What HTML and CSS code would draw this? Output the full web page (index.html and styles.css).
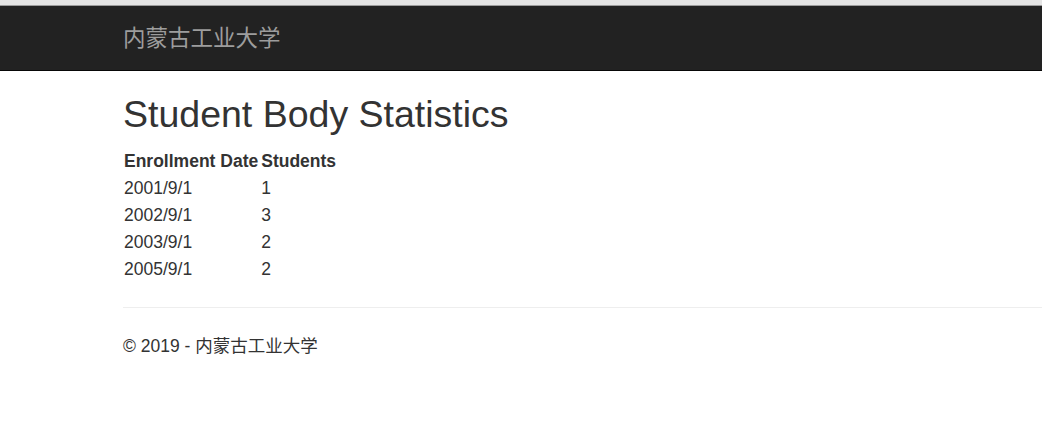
FILE: index.html
```html
<!DOCTYPE html>
<html lang="zh">
<head>
<meta charset="utf-8">
<title>Student Body Statistics</title>
<link rel="stylesheet" href="styles.css">
</head>
<body>
<div class="chrome"></div>
<nav class="navbar">
  <div class="container">
    <a class="brand" href="#">内蒙古工业大学</a>
  </div>
</nav>
<main class="container body-content">
  <h2 class="title">Student Body Statistics</h2>
  <table class="stats">
    <tr><th>Enrollment Date</th><th>Students</th></tr>
    <tr><td>2001/9/1</td><td>1</td></tr>
    <tr><td>2002/9/1</td><td>3</td></tr>
    <tr><td>2003/9/1</td><td>2</td></tr>
    <tr><td>2005/9/1</td><td>2</td></tr>
  </table>
  <hr class="rule">
  <footer class="footer">
    <p>© 2019 - 内蒙古工业大学</p>
  </footer>
</main>
</body>
</html>
```

FILE: styles.css
```css
html, body {
  margin: 0;
  padding: 0;
  background: #fff;
}
body {
  font-family: "Liberation Sans", Arial, "Noto Sans CJK SC", sans-serif;
  font-size: 17.5px;
  line-height: 25px;
  color: #333;
}
.chrome {
  height: 5px;
  background: #e4e4e4;
  border-bottom: 1px solid #9c9c9c;
}
.navbar {
  background: #222;
  border-bottom: 1px solid #080808;
  box-sizing: border-box;
  height: 65px;
}
.container {
  padding-left: 123px;
}
.navbar .container {
  display: flex;
  align-items: center;
  height: 64px;
}
.brand {
  color: #9d9d9d;
  text-decoration: none;
  font-size: 22.5px;
  line-height: 25px;
}
.title {
  font-family: "Liberation Sans", Arial, sans-serif;
  font-weight: 500;
  font-size: 37.5px;
  line-height: 41px;
  margin: 23px 0 11px 0;
  color: #333;
}
.stats {
  border-collapse: separate;
  border-spacing: 3px 3px;
  margin-left: -2px;
  margin-top: 0;
}
.stats th, .stats td {
  padding: 0;
  text-align: left;
  line-height: 24px;
}
.stats th {
  font-weight: bold;
}
.rule {
  border: 0;
  border-top: 1px solid #eee;
  margin: 23px 0 0 0;
}
.footer p {
  margin: 26px 0 0 0;
}
```
